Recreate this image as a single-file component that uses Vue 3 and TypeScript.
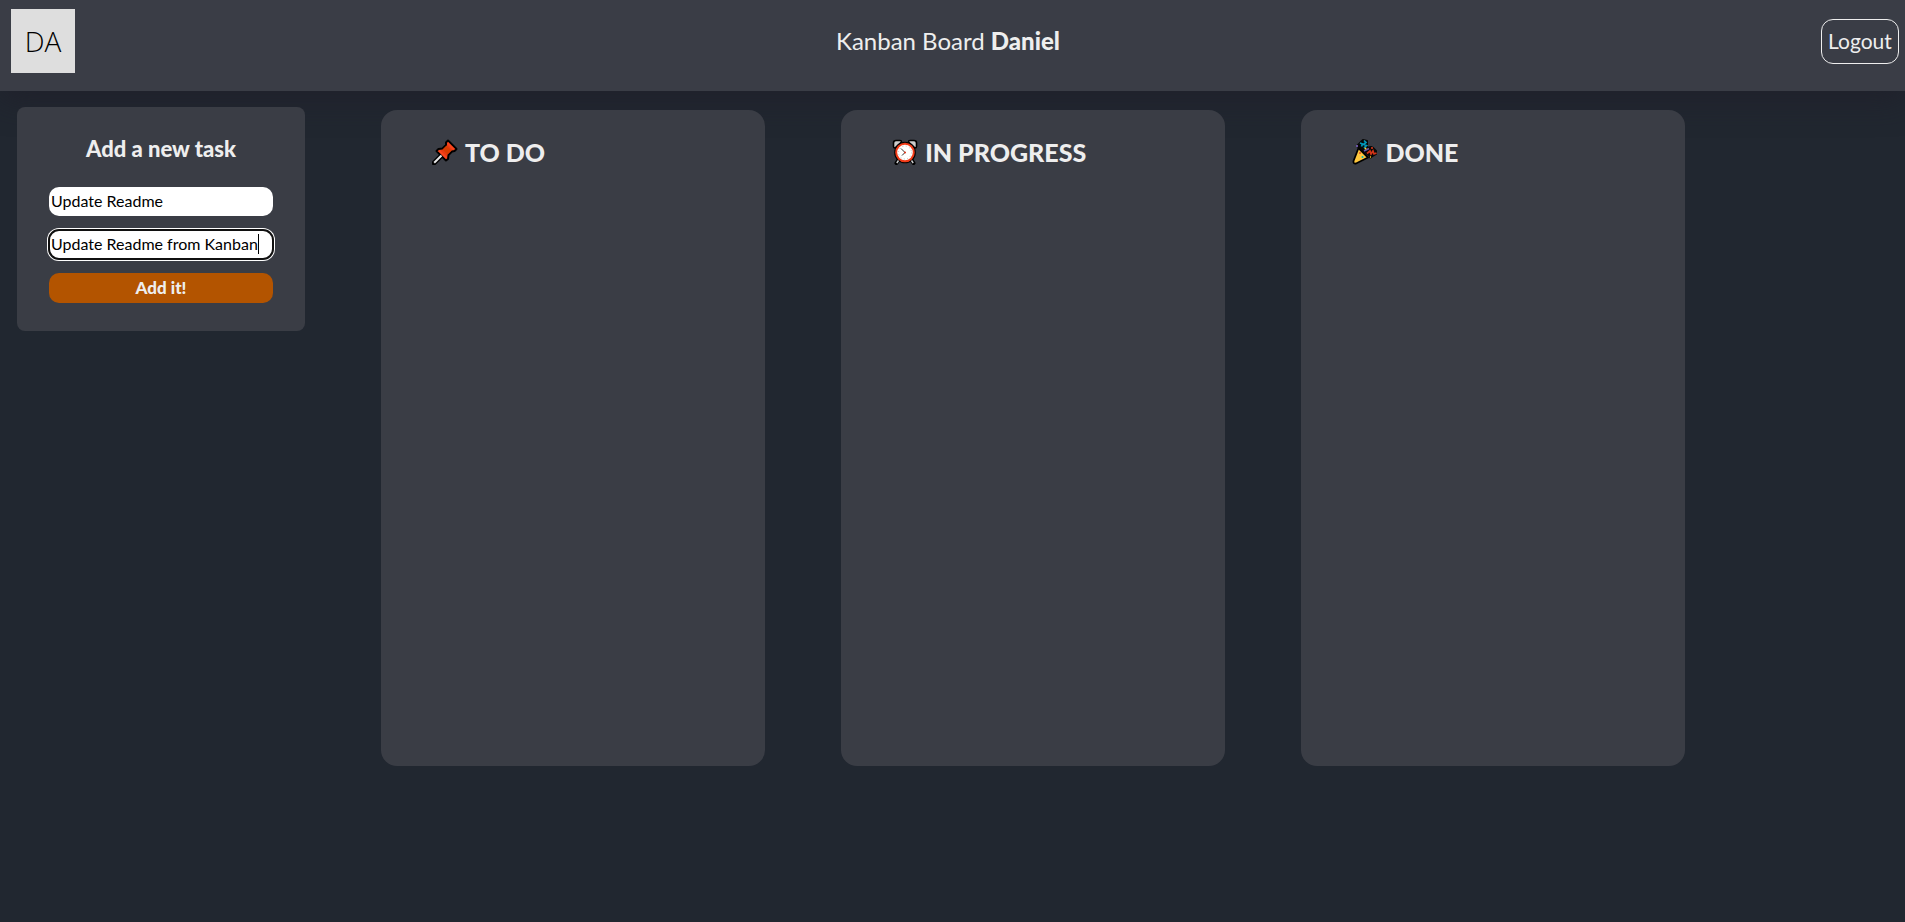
<script setup lang="ts">
import { onMounted, ref, watch } from 'vue'

type Icon = 'pin' | 'clock' | 'party'

interface Column {
  icon: Icon
  title: string
}

const columns: Column[] = [
  { icon: 'pin', title: 'TO DO' },
  { icon: 'clock', title: 'IN PROGRESS' },
  { icon: 'party', title: 'DONE' },
]

const FIELD_PADDING = 2

const title = ref('Update Readme')
const description = ref('Update Readme from Kanban')
const descriptionInput = ref<HTMLInputElement | null>(null)
const caretLeft = ref(0)
const focused = ref(true)

// Places the caret bar after the last character of the description.
function placeCaret(): void {
  const field = descriptionInput.value
  const context = document.createElement('canvas').getContext('2d')
  if (!field || !context) return
  context.font = getComputedStyle(field).font
  const width = context.measureText(description.value).width
  caretLeft.value = Math.min(Math.round(width) + FIELD_PADDING, field.clientWidth - FIELD_PADDING)
}

onMounted(() => {
  const field = descriptionInput.value
  if (!field) return
  field.focus()
  field.setSelectionRange(field.value.length, field.value.length)
  placeCaret()
})

watch(description, placeCaret)
</script>

<template>
  <div class="app">
    <header class="header">
      <div class="avatar">DA</div>
      <p class="brand">Kanban Board <strong>Daniel</strong></p>
      <button class="logout" type="button">Logout</button>
    </header>

    <div class="layout">
      <aside class="sidebar">
        <form class="card" @submit.prevent>
          <h2 class="card-title">Add a new task</h2>
          <input v-model="title" class="field" type="text" aria-label="Title" />
          <div class="caret-field">
            <input
              ref="descriptionInput"
              v-model="description"
              class="field"
              type="text"
              aria-label="Description"
              @focus="focused = true"
              @blur="focused = false"
            />
            <span v-if="focused" class="caret" :style="{ left: caretLeft + 'px' }"></span>
          </div>
          <button class="submit" type="submit">Add it!</button>
        </form>
      </aside>

      <main class="board">
        <section v-for="column in columns" :key="column.title" class="column">
          <h2 class="column-title">
            <svg v-if="column.icon === 'pin'" class="icon" viewBox="0 0 26 26" aria-hidden="true">
              <path d="M11 15 2 24" stroke="#000" stroke-width="4.6" stroke-linecap="round" />
              <path d="M16 1.5 24.500 10 22.500 12 20 12.500 16.500 16 16 20 14 21.500 4.500 12 6.500 10 10.500 9.500 14 6 14 3.500Z" fill="#e93a12" stroke="#000" stroke-width="2" stroke-linejoin="round" />
              <path d="M14.500 6.500 19.500 11.500 15.500 15.500 10.500 10.500Z" fill="#d83b01" />
              <path d="M16 3 23 10 21 11 15 5Z M6 12 8 11 15 18 14 20Z" fill="#f8451d" />
              <path d="M9.500 16.500 2.200 23.800" stroke="#e8e8e8" stroke-width="2" />
            </svg>
            <svg v-else-if="column.icon === 'clock'" class="icon" viewBox="0 0 26 26" aria-hidden="true">
              <path d="M6.500 21 4.500 24M19.500 21 21.500 24" stroke="#000" stroke-width="4" stroke-linecap="round" />
              <path d="M1.500 7.500V4Q1.500 1.500 4 1.500H8Q9.500 1.500 9.500 3L3 9Q1.500 9 1.500 7.500ZM24.500 7.500V4Q24.500 1.500 22 1.500H18Q16.500 1.500 16.500 3L23 9Q24.500 9 24.500 7.500Z" fill="#ccc" stroke="#000" stroke-width="1.600" />
              <circle cx="13" cy="13.500" r="10.800" fill="#000" />
              <circle cx="13" cy="13.500" r="8.800" fill="#fff" stroke="#f03a17" stroke-width="2" />
              <circle cx="13" cy="13.500" r="6.500" fill="none" stroke="#bbb" stroke-width="1" stroke-dasharray="1 2.400" />
              <path d="M9 9.500 13 13.500 10 16.500" fill="none" stroke="#333" stroke-width="1" />
              <circle cx="13" cy="13.500" r="1" fill="#e33416" />
              <path d="M6.500 21.500 4.800 24M19.500 21.500 21.200 24" stroke="#ccc" stroke-width="1.500" />
            </svg>
            <svg v-else class="icon" viewBox="0 0 26 26" aria-hidden="true">
              <path d="M5 7 8 4 11 1 15 2 15 9 19 8 21 9 24 12 24 15 19 18 13 13Z" fill="#080808" stroke="#080808" stroke-width="2" stroke-linejoin="round" />
              <path d="M6.500 9 16 18.500 4 24.500Q1 25 1.500 22Z" fill="#ffc83d" stroke="#000" stroke-width="1.800" stroke-linejoin="round" />
              <path d="M8 4 10.500 5 9.500 7.500M12 1.500 14 3.500 11.500 5.500 14.500 6.500 12 9" fill="none" stroke="#0099bc" stroke-width="1.700" />
              <path d="M15 14.500 18 12 19 15 21 12 22 15 24.500 14" fill="none" stroke="#d13417" stroke-width="1.700" />
              <path d="M12 12 17 9.500" stroke="#6b55a5" stroke-width="1.800" />
              <path d="M4 7H6" stroke="#6b55a5" stroke-width="2" />
              <circle cx="20" cy="9" r="1" fill="#e53b1b" />
              <circle cx="8" cy="14" r="1" fill="#e74627" />
              <circle cx="10.500" cy="18" r="1" fill="#00b7c3" />
              <circle cx="18.500" cy="18" r="1.200" fill="#ffd22e" stroke="#000" stroke-width="1" />
              <circle cx="13.500" cy="9.500" r="1" fill="#ffd22e" />
            </svg>
            <span>{{ column.title }}</span>
          </h2>
        </section>
      </main>
    </div>
  </div>
</template>

<style>
body {
  margin: 0;
  background: #212730;
}
</style>

<style scoped>
.app {
  min-height: 100vh;
  box-sizing: border-box;
  background: #212730;
  color: #eee;
  font-family: 'Gill Sans', 'Gill Sans MT', Lato, sans-serif;
}

.header {
  display: flex;
  align-items: flex-start;
  justify-content: space-between;
  height: 91px;
  padding: 9px 6px 0 11px;
  box-sizing: border-box;
  background: #3a3d46;
  box-shadow: 0 8px 32px rgba(32, 30, 42, 0.7);
}

.avatar {
  width: 64px;
  height: 64px;
  background: #dedede;
  color: #000;
  font: 300 28px/64px 'Segoe UI', 'Open Sans', sans-serif;
  text-align: center;
}

.brand {
  margin: 16px 0 0;
  font-size: 24px;
  line-height: 32px;
}

.brand strong {
  font-weight: 900;
}

.logout {
  width: 78px;
  height: 45px;
  margin-top: 10px;
  padding: 0 0 2px;
  border: 1px solid #eee;
  border-radius: 12px;
  background: transparent;
  color: #eee;
  font: 21px/32px 'Gill Sans', 'Gill Sans MT', Lato, sans-serif;
}

.layout {
  display: grid;
  grid-template-columns: 20% 1fr;
}

.sidebar {
  padding: 16px 17px;
}

.card {
  position: relative;
  display: flex;
  flex-direction: column;
  gap: 14px;
  max-width: 288px;
  padding: 26px 32px 28px;
  box-sizing: border-box;
  border-radius: 8px;
  background: #3a3d45;
}

.card-title {
  margin: 0 0 8px;
  font-size: 22px;
  font-weight: 900;
  line-height: 32px;
  text-align: center;
}

.field {
  display: block;
  width: 100%;
  height: 29px;
  margin: 0;
  padding: 0 2px 2px;
  box-sizing: border-box;
  border: 0;
  border-radius: 10px;
  background: #fff;
  color: #000;
  font: 16px/24px 'Gill Sans', 'Gill Sans MT', Lato, sans-serif;
}

.field:focus {
  outline: 2px solid #101010;
  outline-offset: -1px;
  box-shadow: 0 0 0 2px #fff;
}

.caret-field {
  position: relative;
}

.caret-field .field {
  caret-color: transparent;
}

.caret {
  position: absolute;
  top: 4px;
  width: 1px;
  height: 20px;
  background: #000;
}

.submit {
  height: 30px;
  padding: 0;
  border: 0;
  border-radius: 10px;
  background: #b35400;
  color: #eee;
  font: 900 17px/24px 'Gill Sans', 'Gill Sans MT', Lato, sans-serif;
}

.board {
  display: flex;
  gap: 4vw;
  padding-top: 19px;
}

.column {
  flex: 0 1 384px;
  min-height: 656px;
  padding: 26px 50px;
  box-sizing: border-box;
  border-radius: 16px;
  background: #3a3d45;
}

.column-title {
  display: flex;
  align-items: center;
  gap: 7px;
  margin: 0;
  font-size: 25px;
  font-weight: 900;
  line-height: 32px;
}

.icon {
  flex: none;
  width: 26px;
  height: 26px;
  margin-left: 1px;
  fill: none;
}
</style>
